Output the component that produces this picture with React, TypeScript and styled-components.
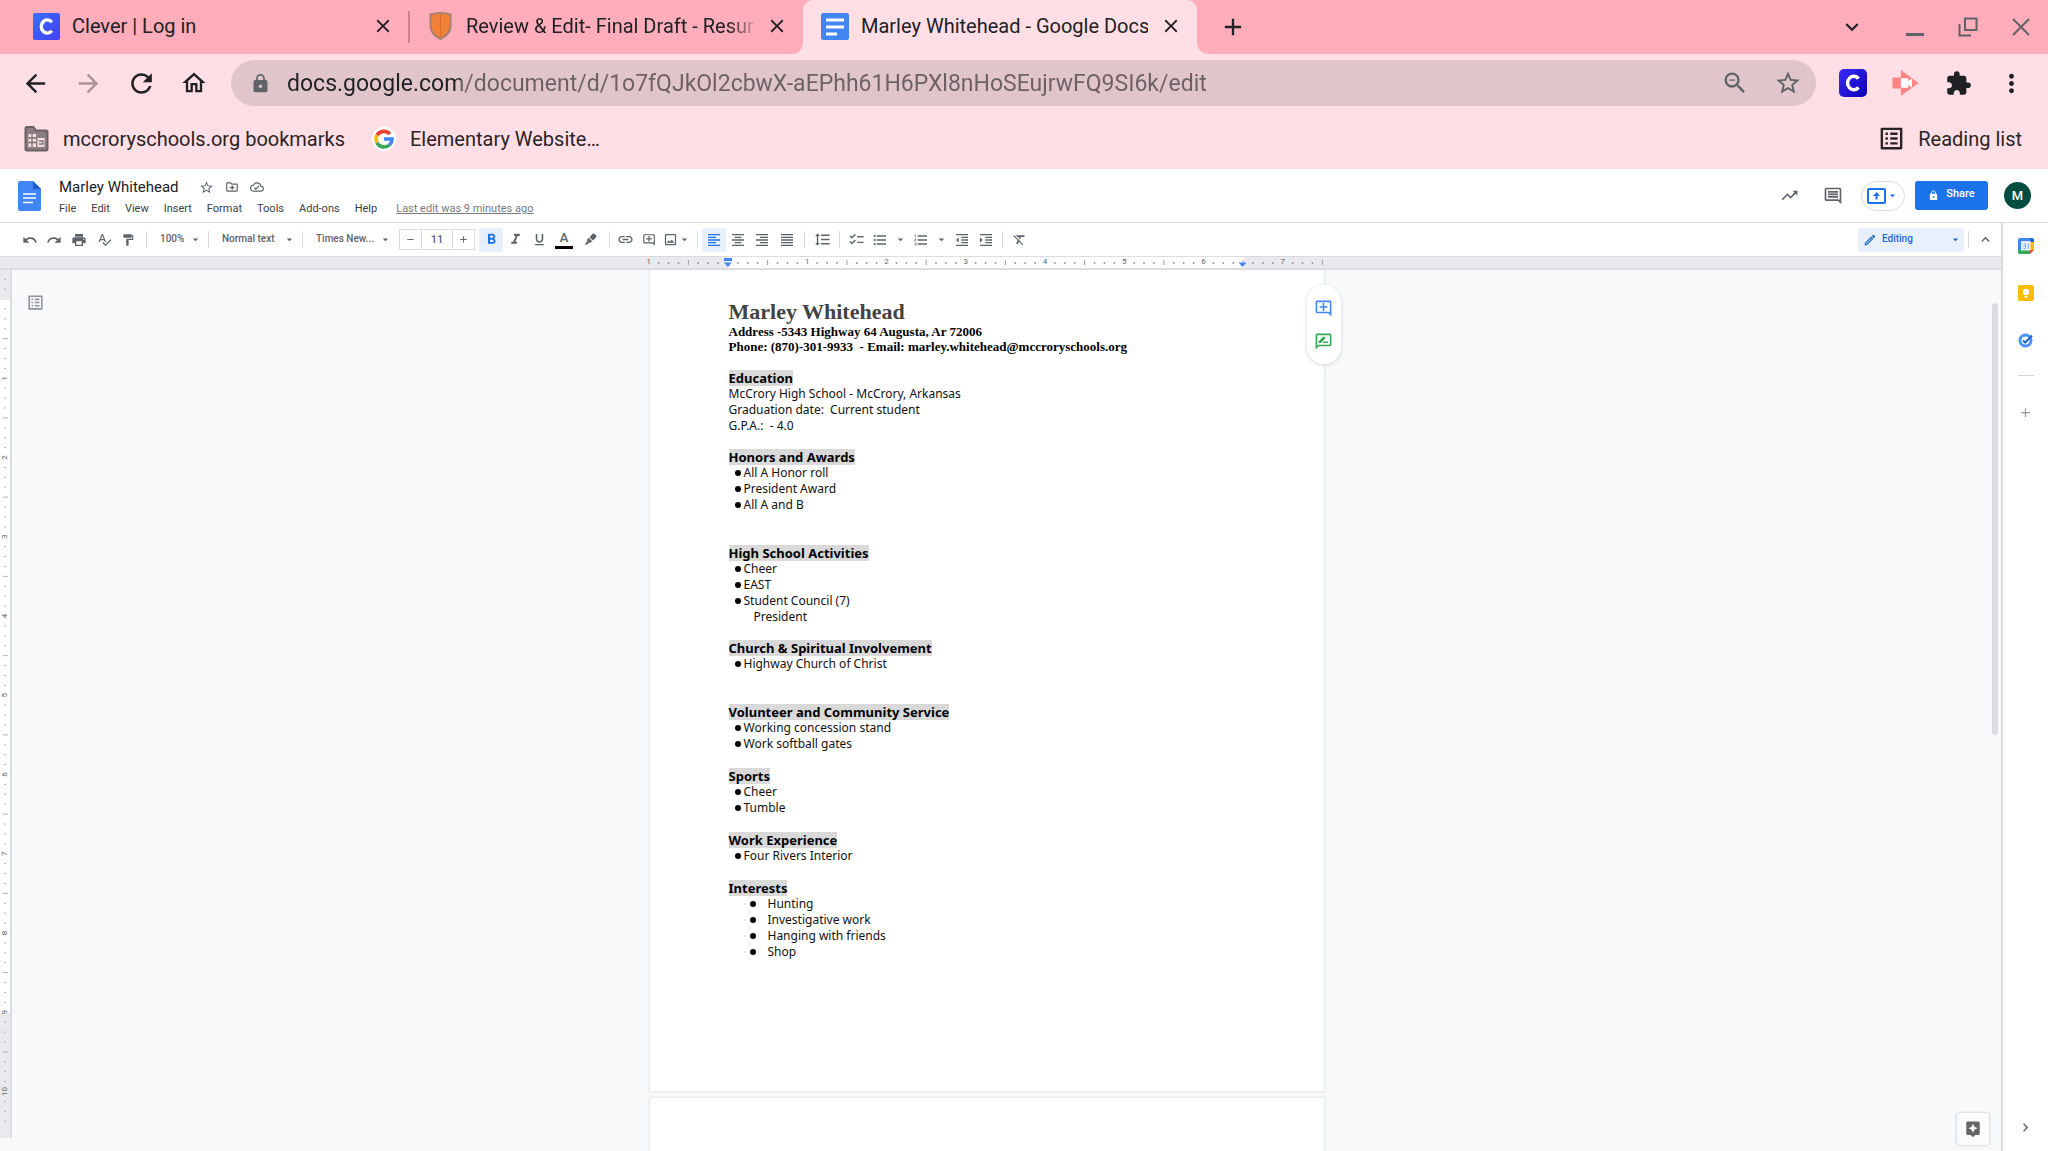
import React from "react";
import styled, { createGlobalStyle, css } from "styled-components";
import {
  MdAdd, MdArrowBack, MdArrowDropDown, MdArrowForward, MdAssistant, MdChecklist, MdChevronRight,
  MdClose, MdExtension, MdFormatAlignCenter, MdFormatAlignJustify, MdFormatAlignLeft,
  MdFormatAlignRight, MdFormatBold, MdFormatClear, MdFormatIndentDecrease, MdFormatIndentIncrease,
  MdFormatItalic, MdFormatLineSpacing, MdFormatListBulleted, MdFormatListNumbered, MdFormatPaint,
  MdFormatUnderlined, MdKeyboardArrowDown, MdKeyboardArrowUp, MdLink, MdListAlt, MdLock, MdMoreVert,
  MdOutlineAddComment, MdOutlineCloudDone, MdOutlineComment, MdOutlineDriveFileMove,
  MdOutlineEdit, MdOutlineHome, MdOutlineImage, MdOutlineRateReview, MdPrint, MdRedo, MdRefresh,
  MdRemove, MdSpellcheck, MdStarBorder, MdTrendingUp, MdUndo, MdZoomOut,
} from "react-icons/md";

const ui = `Roboto, "Liberation Sans", sans-serif`;
const grey = "#5f6368";

const Global = createGlobalStyle`
  * { box-sizing: border-box; }
  body { margin: 0; font-family: ${ui}; color: #202124; background: #fff; }
  button, input, select { font: inherit; color: inherit; }
  h1, h2, p, ul { margin: 0; padding: 0; }
`;

const Screen = styled.div`
  display: flex;
  flex-direction: column;
  height: 100vh;
  overflow: hidden;
`;

const PlainButton = styled.button<{ $w?: number }>`
  display: flex;
  flex: none;
  align-items: center;
  justify-content: center;
  width: ${(p) => (p.$w ? `${p.$w}px` : "auto")};
  padding: 0;
  border: 0;
  background: none;
  svg { flex: none; }
`;

/* Browser frame */
const TabStrip = styled.div`
  display: flex;
  flex: none;
  height: 54px;
  padding: 0 1px 0 15px;
  background: #ffadba;
`;

const Tab = styled.div<{ $active?: boolean; $divided?: boolean }>`
  position: relative;
  display: flex;
  align-items: center;
  gap: 12px;
  width: 394px;
  padding: 0 15px 2px 18px;
  font-size: 20px;
  ${(p) => p.$divided && css`
    &::after {
      content: "";
      position: absolute;
      right: -1px;
      top: 11px;
      width: 2px;
      height: 32px;
      background: #c9858f;
    }
  `}
  ${(p) => p.$active && css`
    background: #ffdfe5;
    border-radius: 10px 10px 0 0;
    &::before, &::after {
      content: "";
      position: absolute;
      bottom: 0;
      width: 10px;
      height: 10px;
    }
    &::before {
      left: -10px;
      background: radial-gradient(circle at 0 0, transparent 9px, #ffdfe5 10px);
    }
    &::after {
      right: -10px;
      background: radial-gradient(circle at 100% 0, transparent 9px, #ffdfe5 10px);
    }
  `}
`;

const TabTitle = styled.span<{ $fade?: boolean }>`
  flex: 1;
  overflow: hidden;
  white-space: nowrap;
  ${(p) => p.$fade && css`
    mask-image: linear-gradient(90deg, #000 91%, transparent 102%);
  `}
`;

const WindowButtons = styled.div`
  display: flex;
  align-items: center;
  margin-left: auto;
  color: ${grey};
  button { width: 53px; }
  button:first-child { width: 72px; color: #202124; }
`;

const NavBar = styled.div`
  display: flex;
  flex: none;
  align-items: center;
  height: 58px;
  padding: 0 10px 0 9px;
  background: #ffdfe5;
`;

const Omnibox = styled.label`
  display: flex;
  flex: 1;
  align-items: center;
  height: 46px;
  margin: 0 10px 0 11px;
  padding: 0 2px 0 19px;
  border-radius: 23px;
  background: #e0c5ca;
  color: ${grey};
  input {
    flex: 1;
    min-width: 0;
    margin-left: 16px;
    padding: 0;
    border: 0;
    outline: 0;
    font-size: 23px;
    color: transparent;
    background: linear-gradient(90deg, #202124 174px, #6b6064 174px);
    background-clip: text;
    -webkit-background-clip: text;
  }
`;

const BookmarkBar = styled.div`
  display: flex;
  flex: none;
  align-items: center;
  gap: 27px;
  height: 57px;
  padding: 0 26px 4px 24px;
  background: #ffdfe5;
  font-size: 20px;
`;

const Bookmark = styled.a<{ $end?: boolean; $gap: number }>`
  display: flex;
  align-items: center;
  gap: ${(p) => p.$gap}px;
  margin-left: ${(p) => (p.$end ? "auto" : "0")};
  color: #2b2427;
  text-decoration: none;
`;

/* Docs header */
const DocsHeader = styled.header`
  display: flex;
  flex: none;
  align-items: center;
  height: 54px;
  padding: 0 17px 0 18px;
  border-bottom: 1px solid #dadce0;
  color: ${grey};
`;

const TitleBlock = styled.div`
  display: flex;
  flex-direction: column;
  gap: 4px;
  margin-left: 18px;
  padding-top: 3px;
`;

const TitleRow = styled.div`
  display: flex;
  align-items: center;
  gap: 9px;
  height: 20px;
`;

const DocTitle = styled.h1`
  margin-right: 11px;
  font-size: 15px;
  line-height: 20px;
  font-weight: 400;
  color: #202124;
`;

const MenuRow = styled.nav`
  display: flex;
  gap: 15px;
  font-size: 11px;
  line-height: 16px;
  color: #3c4043;
  a { margin-left: 4px; color: #777b80; }
`;

const HeaderActions = styled.div`
  display: flex;
  align-items: center;
  margin-left: auto;
`;

const PresentButton = styled(PlainButton)`
  width: 44px;
  height: 30px;
  margin: 0 10px 0 6px;
  border: 1px solid #dadce0;
  border-radius: 15px;
  color: #1a73e8;
`;

const ShareButton = styled(PlainButton)`
  gap: 7px;
  width: 73px;
  height: 29px;
  border-radius: 3px;
  background: #1a73e8;
  color: #fff;
  font-size: 11px;
  font-weight: 500;
  span { padding-bottom: 5px; }
`;

const Avatar = styled(PlainButton)`
  width: 27px;
  height: 27px;
  margin-left: 16px;
  border-radius: 50%;
  background: #004d40;
  color: #fff;
  font-size: 13px;
  font-weight: 500;
`;

/* Workspace */
const Workspace = styled.div`
  display: flex;
  flex: 1;
  min-height: 0;
`;

const Editor = styled.div`
  display: flex;
  flex: 1;
  flex-direction: column;
  min-width: 0;
`;

const Toolbar = styled.div`
  display: flex;
  flex: none;
  align-items: center;
  height: 33px;
  padding: 0 4px 0 18px;
  color: ${grey};
`;

const ToolButton = styled(PlainButton)<{ $on?: boolean }>`
  width: ${(p) => p.$w ?? 24}px;
  height: 24px;
  border-radius: 2px;
  background: ${(p) => (p.$on ? "#e8f0fe" : "none")};
  color: ${(p) => (p.$on ? "#1a73e8" : "inherit")};
`;

const Divider = styled.span<{ $tight?: boolean }>`
  width: 1px;
  height: 17px;
  margin: ${(p) => (p.$tight ? "0 4px" : "0 3px 0 6px")};
  background: #dadce0;
`;

const Picker = styled.label<{ $w: number }>`
  display: flex;
  align-items: center;
  width: ${(p) => p.$w}px;
  padding-left: 10px;
  font-size: 10px;
  font-weight: 500;
  select {
    flex: 1;
    min-width: 0;
    padding: 0 0 2px;
    border: 0;
    appearance: none;
    background: none;
  }
`;

const ModePicker = styled(Picker)`
  height: 24px;
  margin-left: auto;
  padding: 0 2px 0 5px;
  border-radius: 3px;
  background: #e8f0fe;
  color: #1967d2;
  select { margin-left: 5px; }
`;

const SizeBox = styled.div`
  display: flex;
  width: 76px;
  height: 21px;
  margin: 0 4px 0 7px;
  border: 1px solid #dadce0;
  input {
    width: 32px;
    padding: 0;
    border: solid #dadce0;
    border-width: 0 1px;
    font-size: 11px;
    font-weight: 500;
    text-align: center;
  }
  button { flex: 1; }
`;

const TextColour = styled.span`
  display: block;
  width: 18px;
  border-bottom: 3px solid #000;
  font-size: 13px;
  line-height: 16px;
  font-weight: 500;
`;

const RulerBar = styled.div`
  display: flex;
  flex: none;
  justify-content: center;
  height: 14px;
  padding: 0 40px 0 12px;
  border: solid #dadce0;
  border-width: 1px 0 2px;
  background: #e8eaed;
  svg { overflow: visible; }
`;

const Canvas = styled.main`
  position: relative;
  display: flex;
  flex: 1;
  align-items: flex-start;
  min-height: 0;
  background: #f8f9fb;
`;

const SideRuler = styled.div`
  flex: none;
  width: 12px;
  border-right: 2px solid #dadce0;
  background: #e8eaed;
  svg { display: block; }
`;

const Pages = styled.div`
  display: flex;
  flex: 1;
  flex-direction: column;
  align-items: center;
  gap: 7px;
  height: 100%;
  padding-right: 40px;
  overflow: hidden;
`;

const Sheet = styled.article`
  position: relative;
  flex: none;
  width: 674px;
  min-height: 821px;
  padding: 29px 79px;
  background: #fff;
  box-shadow: 0 0 2px 1px #e3e5e8;
  font-family: "Noto Sans", "Open Sans", sans-serif;
  font-size: 12px;
  line-height: 16px;
  color: #111;
  white-space: pre-wrap;
`;

const PersonName = styled.h1`
  font: bold 22px/25px "Liberation Serif", serif;
  color: #434343;
`;

const Contact = styled.p`
  font: bold 13px/15px "Liberation Serif", serif;
  color: #000;
`;

const Section = styled.section<{ $gap: number }>`
  margin-top: ${(p) => p.$gap}px;
  h2 {
    font-size: 13px;
    line-height: 16px;
    color: #000;
  }
  mark {
    display: inline-block;
    background: #d9d9d9;
    color: inherit;
  }
`;

const Bullets = styled.ul<{ $wide?: boolean }>`
  padding-left: ${(p) => (p.$wide ? 21 : 6)}px;
  list-style: none;
  li { display: flex; align-items: center; }
  li::before {
    content: "";
    width: 6px;
    height: 6px;
    margin-right: ${(p) => (p.$wide ? 12 : 3)}px;
    border-radius: 50%;
    background: #000;
  }
`;

const Continuation = styled.p`
  padding-left: 25px;
`;

const CommentPill = styled.div`
  position: absolute;
  top: 15px;
  right: -17px;
  display: flex;
  flex-direction: column;
  align-items: center;
  justify-content: center;
  gap: 14px;
  width: 34px;
  height: 79px;
  border-radius: 17px;
  background: #fff;
  box-shadow: 0 1px 4px #d4d7db;
  button:first-child { color: #4285f4; }
  button:last-child { color: #34a853; }
`;

const OutlineButton = styled(PlainButton)`
  position: absolute;
  left: 26px;
  top: 23px;
  color: #8f9296;
`;

const ScrollThumb = styled.div`
  position: absolute;
  right: 3px;
  top: 33px;
  width: 6px;
  height: 49%;
  border-radius: 3px;
  background: #dadce0;
`;

const ExploreButton = styled(PlainButton)`
  position: absolute;
  right: 12px;
  bottom: 6px;
  width: 32px;
  height: 32px;
  border-radius: 3px;
  background: #fbfbfb;
  box-shadow: 0 0 3px #b5b8bc;
  color: #666;
`;

const SideRail = styled.aside`
  display: flex;
  flex: none;
  flex-direction: column;
  align-items: center;
  gap: 31px;
  width: 47px;
  padding: 15px 0 15px;
  border-left: 2px solid #dadce0;
  background: #fff;
  hr {
    width: 16px;
    margin: -4px 0 -2px;
    border: 0;
    border-top: 1px solid #d0d3d7;
  }
  button:last-child { margin-top: auto; }
`;

const CleverLogo = ({ size, deep }: { size: number; deep?: boolean }) => (
  <svg width={size} height={size} viewBox="0 0 28 28">
    <defs>
      <linearGradient id={deep ? "cd" : "cl"} x1="0" y1="0" x2="1" y2="1">
        <stop offset="0" stopColor={deep ? "#3a2cff" : "#3b6dff"} />
        <stop offset="1" stopColor={deep ? "#0b00b0" : "#4340f0"} />
      </linearGradient>
    </defs>
    <rect width="28" height="28" rx={deep ? 5 : 2} fill={`url(#${deep ? "cd" : "cl"})`} />
    <path d="M19.5 9.6A6.2 6.8 0 1 0 19.5 18.4" fill="none" stroke="#fff" strokeWidth="3.4" />
  </svg>
);

const ShieldLogo = () => (
  <svg width="27" height="28" viewBox="0 0 27 28">
    <path d="M3.5 2.5Q13.500 -.5 23.500 2.500V15Q22.500 22.500 13.500 27Q4.500 22.500 3.500 15Z" fill="#f28138" stroke="#a97f70" strokeWidth="2" />
    <path d="M13.500 2V25" stroke="#d96c2c" strokeWidth="1" />
  </svg>
);

const DocsFavicon = () => (
  <svg width="28" height="27" viewBox="0 0 28 27">
    <rect width="28" height="27" rx="2.500" fill="#4285f4" />
    <path d="M5 7h18M5 14h18M5 21h11" stroke="#fff" strokeWidth="3" />
  </svg>
);

const DocsLogo = () => (
  <svg width="23" height="30" viewBox="0 0 23 30">
    <path d="M2 0H15L23 8V28Q23 30 21 30H2Q0 30 0 28V2Q0 0 2 0Z" fill="#4285f4" />
    <path d="M15 0L23 8H15Z" fill="#1a5dc8" />
    <path d="M5 13h13M5 17h13M5 21.500h10" stroke="#fff" strokeWidth="1.700" />
  </svg>
);

const GoogleLogo = () => (
  <svg width="24" height="24" viewBox="0 0 24 24">
    <circle cx="12" cy="12" r="12" fill="#fff" />
    <g fill="none" strokeWidth="3.600">
      <path d="M17.800 7A8 8 0 0 0 5 8.200" stroke="#ea4335" />
      <path d="M5 8.200A8 8 0 0 0 5 15.800" stroke="#fbbc05" />
      <path d="M5 15.800A8 8 0 0 0 17.300 18" stroke="#34a853" />
      <path d="M17.300 18A8 8 0 0 0 20 12H12" stroke="#4285f4" />
    </g>
  </svg>
);

const ManagedFolder = () => (
  <svg width="25" height="26" viewBox="0 0 25 26">
    <path d="M1.500 2.500Q1.500 1 3 1H9.500L12 4.500H22Q23.500 4.500 23.500 6V23Q23.500 24.500 22 24.500H3Q1.500 24.500 1.500 23Z" fill="#8a7f83" stroke="#6b6266" strokeWidth="2" />
    <path d="M4.500 8H12V21H4.500ZM13.500 12H20.500V21H13.500Z" fill="#f4dfe3" />
    <path d="M4.500 12H12M4.500 16.500H12M8 8V21M15 15H19V18H15" fill="none" stroke="#7a7074" strokeWidth="1.300" />
  </svg>
);

const CastArrow = () => (
  <svg width="27" height="26" viewBox="0 0 28 28">
    <path d="M0 8H9V20H0ZM9 0L28 14L9 28Z" fill="#ff8585" />
    <path d="M9 9H17V12L21 9V19L17 16V19H9Z" fill="#fff" />
  </svg>
);

const RestoreIcon = () => (
  <svg width="20" height="20" viewBox="0 0 20 20" fill="none" stroke={grey} strokeWidth="2">
    <path d="M7 1.500H18.500V13H7ZM1.500 7V18.500H13" />
  </svg>
);

const CloseIcon = () => (
  <svg width="18" height="18" viewBox="0 0 18 18" stroke={grey} strokeWidth="2">
    <path d="M1 1L17 17M17 1L1 17" />
  </svg>
);

const MinimiseIcon = () => (
  <svg width="20" height="20" viewBox="0 0 20 20" stroke={grey} strokeWidth="3">
    <path d="M1 17.500H19" />
  </svg>
);

const HighlighterIcon = () => (
  <svg width="13" height="13" viewBox="0 0 14 14" fill={grey}>
    <path d="M8.500 1.500Q10 0 11.500 1L13 2.500Q14 4 12.500 5.500L9.500 8L6 4.500ZM5.200 5.200L8.800 8.800L7 10.500H5L3.500 12.500H.5L3.500 9V7Z" />
  </svg>
);

const PresentIcon = () => (
  <svg width="19" height="16" viewBox="0 0 19 16">
    <rect x="1" y="1" width="17" height="14" rx="1" fill="none" stroke="#1a73e8" strokeWidth="2" />
    <path d="M9.500 4L13 8H10.500V11.500H8.500V8H6Z" fill="#1a73e8" />
  </svg>
);

const CalendarIcon = () => (
  <svg width="16" height="16" viewBox="0 0 16 16">
    <path d="M0 2Q0 0 2 0H12V4H4V16H2Q0 16 0 14Z" fill="#4285f4" />
    <path d="M12 0H14Q16 0 16 2V4H12Z" fill="#1967d2" />
    <path d="M12 4H16V12H12Z" fill="#fbbc04" />
    <path d="M4 12H12V16H2Q0 16 0 14V12Z" fill="#34a853" />
    <path d="M12 12H16L12 16Z" fill="#ea4335" />
    <rect x="3" y="3" width="9.500" height="9.500" fill="#e4eefe" />
    <path d="M5.500 6H7.500V10.500M5.500 8.200H7.500M5.500 10.500H7.500M10.500 5.500V11" fill="none" stroke="#8ab4f8" />
  </svg>
);

const KeepIcon = () => (
  <svg width="16" height="16" viewBox="0 0 16 16">
    <rect width="16" height="16" rx="2" fill="#fbbc04" />
    <circle cx="8" cy="7" r="3.200" fill="#fff" />
    <path d="M6.500 11H9.500V12.500H6.500Z" fill="#fff" />
  </svg>
);

const TasksIcon = () => (
  <svg width="16" height="16" viewBox="0 0 16 16" fill="none">
    <circle cx="7.500" cy="8.500" r="5.500" stroke="#4a90ff" strokeWidth="3" />
    <path d="M5 8.500L7.200 10.500L14 3.500" stroke="#1a66d6" strokeWidth="2" />
  </svg>
);

const INCH = 79.25;

/** Eighth-inch marks, measured from the margin at `zero`. */
const marks = (from: number, to: number, zero: number) =>
  Array.from({ length: to - from + 1 }, (_, i) => from + i).map((n) => ({
    n,
    at: zero + (n * INCH) / 8,
    whole: n % 8 === 0,
    half: n % 4 === 0,
  }));

const TopRuler = () => (
  <svg width="674" height="11" viewBox="0 0 674 11" aria-label="Horizontal ruler">
    <rect x="78" width="516" height="11" fill="#fff" />
    {marks(-8, 60, 78).map(({ n, at, whole, half }) =>
      whole ? (
        n !== 0 && (
          <text key={n} x={at} y="7" fontSize="8" textAnchor="middle" fill={grey}>{Math.abs(n / 8)}</text>
        )
      ) : (
        <path key={n} d={half ? `M${at} 3V8` : `M${at} 5V7`} stroke="#9a9da1" strokeWidth={half ? 1 : 1.5} />
      )
    )}
    <path d="M74 1H82V4H74ZM74 5.500H82L78 10Z" fill="#4285f4" />
    <path d="M588.500 5.500H596.500L592.500 10Z" fill="#4285f4" />
  </svg>
);

const LeftRuler = () => (
  <svg width="10" height="868" viewBox="0 0 10 868" aria-label="Vertical ruler">
    <rect y="30" width="10" height="713" fill="#fff" />
    {marks(-3, 83, 29).map(({ n, at, whole, half }) =>
      whole ? (
        n !== 0 && (
          <text key={n} transform={`translate(7 ${at}) rotate(-90)`} fontSize="8" textAnchor="middle" fill={grey}>{n / 8}</text>
        )
      ) : (
        <path key={n} d={half ? `M3 ${at}H8` : `M4 ${at}H6`} stroke="#b0b3b7" strokeWidth="1" />
      )
    )}
  </svg>
);

const sections = [
  { title: "Honors and Awards", gap: 15, items: ["All A Honor roll", "President Award", "All A and B"] },
  { title: "High School Activities", gap: 32, items: ["Cheer", "EAST", "Student Council (7)"], more: "President" },
  { title: "Church & Spiritual Involvement", gap: 15, items: ["Highway Church of Christ"] },
  { title: "Volunteer and Community Service", gap: 32, items: ["Working concession stand", "Work softball gates"] },
  { title: "Sports", gap: 16, items: ["Cheer", "Tumble"] },
  { title: "Work Experience", gap: 16, items: ["Four Rivers Interior"] },
  { title: "Interests", gap: 16, wide: true, items: ["Hunting", "Investigative work", "Hanging with friends", "Shop"] },
];

const menus = ["File", "Edit", "View", "Insert", "Format", "Tools", "Add-ons", "Help"];

const Tool = ({ label, on, w, children }: { label: string; on?: boolean; w?: number; children: React.ReactNode }) => (
  <ToolButton aria-label={label} $on={on} $w={w}>{children}</ToolButton>
);

const Caret = () => <MdArrowDropDown size={13} />;

export default function App() {
  return (
    <Screen>
      <Global />
      <TabStrip>
        <Tab $divided>
          <CleverLogo size={27} />
          <TabTitle>Clever | Log in</TabTitle>
          <PlainButton $w={22} aria-label="Close tab"><MdClose size={22} /></PlainButton>
        </Tab>
        <Tab>
          <ShieldLogo />
          <TabTitle $fade>Review &amp; Edit- Final Draft - Resume</TabTitle>
          <PlainButton $w={22} aria-label="Close tab"><MdClose size={22} /></PlainButton>
        </Tab>
        <Tab $active>
          <DocsFavicon />
          <TabTitle>Marley Whitehead - Google Docs</TabTitle>
          <PlainButton $w={22} aria-label="Close tab"><MdClose size={22} /></PlainButton>
        </Tab>
        <PlainButton $w={72} aria-label="New tab"><MdAdd size={28} /></PlainButton>
        <WindowButtons>
          <PlainButton aria-label="Search tabs"><MdKeyboardArrowDown size={26} /></PlainButton>
          <PlainButton aria-label="Minimise"><MinimiseIcon /></PlainButton>
          <PlainButton aria-label="Restore"><RestoreIcon /></PlainButton>
          <PlainButton aria-label="Close window"><CloseIcon /></PlainButton>
        </WindowButtons>
      </TabStrip>

      <NavBar>
        <PlainButton $w={53} aria-label="Back"><MdArrowBack size={29} /></PlainButton>
        <PlainButton $w={53} aria-label="Forward"><MdArrowForward size={29} color="#a8959a" /></PlainButton>
        <PlainButton $w={53} aria-label="Reload"><MdRefresh size={31} /></PlainButton>
        <PlainButton $w={52} aria-label="Home"><MdOutlineHome size={28} /></PlainButton>
        <Omnibox>
          <MdLock size={21} />
          <input aria-label="Address" defaultValue="docs.google.com/document/d/1o7fQJkOl2cbwX-aEPhh61H6PXl8nHoSEujrwFQ9SI6k/edit" />
          <PlainButton $w={53} aria-label="Zoom"><MdZoomOut size={28} /></PlainButton>
          <PlainButton $w={53} aria-label="Bookmark this page"><MdStarBorder size={28} /></PlainButton>
        </Omnibox>
        <PlainButton $w={53} aria-label="Clever"><CleverLogo size={28} deep /></PlainButton>
        <PlainButton $w={53} aria-label="Screencastify"><CastArrow /></PlainButton>
        <PlainButton $w={53} aria-label="Extensions"><MdExtension size={27} /></PlainButton>
        <PlainButton $w={53} aria-label="Browser menu"><MdMoreVert size={29} /></PlainButton>
      </NavBar>

      <BookmarkBar>
        <Bookmark href="#" $gap={14}><ManagedFolder />mccroryschools.org bookmarks</Bookmark>
        <Bookmark href="#" $gap={14}><GoogleLogo />Elementary Website…</Bookmark>
        <Bookmark href="#" $gap={12} $end><MdListAlt size={29} />Reading list</Bookmark>
      </BookmarkBar>

      <DocsHeader>
        <DocsLogo />
        <TitleBlock>
          <TitleRow>
            <DocTitle>Marley Whitehead</DocTitle>
            <PlainButton $w={16} aria-label="Star"><MdStarBorder size={15} /></PlainButton>
            <PlainButton $w={16} aria-label="Move"><MdOutlineDriveFileMove size={14} /></PlainButton>
            <PlainButton $w={16} aria-label="Saved to Drive"><MdOutlineCloudDone size={14} /></PlainButton>
          </TitleRow>
          <MenuRow>
            {menus.map((m) => <PlainButton key={m}>{m}</PlainButton>)}
            <a href="#">Last edit was 9 minutes ago</a>
          </MenuRow>
        </TitleBlock>
        <HeaderActions>
          <PlainButton $w={44} aria-label="Activity"><MdTrendingUp size={19} /></PlainButton>
          <PlainButton $w={44} aria-label="Comments"><MdOutlineComment size={20} /></PlainButton>
          <PresentButton aria-label="Present"><PresentIcon /><Caret /></PresentButton>
          <ShareButton><MdLock size={11} /><span>Share</span></ShareButton>
          <Avatar aria-label="Account">M</Avatar>
        </HeaderActions>
      </DocsHeader>

      <Workspace>
        <Editor>
          <Toolbar>
            <Tool label="Undo"><MdUndo size={16} /></Tool>
            <Tool label="Redo"><MdRedo size={16} /></Tool>
            <Tool label="Print" w={26}><MdPrint size={16} /></Tool>
            <Tool label="Spelling"><MdSpellcheck size={15} /></Tool>
            <Tool label="Paint format"><MdFormatPaint size={14} /></Tool>
            <Divider />
            <Picker $w={52}>
              <select aria-label="Zoom"><option>100%</option></select>
              <Caret />
            </Picker>
            <Divider />
            <Picker $w={84}>
              <select aria-label="Style"><option>Normal text</option></select>
              <Caret />
            </Picker>
            <Divider />
            <Picker $w={86}>
              <select aria-label="Font"><option>Times New...</option></select>
              <Caret />
            </Picker>
            <SizeBox>
              <PlainButton aria-label="Smaller"><MdRemove size={11} /></PlainButton>
              <input aria-label="Font size" defaultValue="11" />
              <PlainButton aria-label="Larger"><MdAdd size={11} /></PlainButton>
            </SizeBox>
            <Tool label="Bold" on><MdFormatBold size={17} /></Tool>
            <Tool label="Italic"><MdFormatItalic size={17} /></Tool>
            <Tool label="Underline"><MdFormatUnderlined size={15} /></Tool>
            <Tool label="Text colour" w={26}><TextColour>A</TextColour></Tool>
            <Tool label="Highlight colour" w={26}><HighlighterIcon /></Tool>
            <Divider />
            <Tool label="Link"><MdLink size={17} /></Tool>
            <Tool label="Add comment"><MdOutlineAddComment size={14} /></Tool>
            <Tool label="Image" w={32}><MdOutlineImage size={15} /><Caret /></Tool>
            <Divider $tight />
            <Tool label="Align left" on><MdFormatAlignLeft size={16} /></Tool>
            <Tool label="Align centre"><MdFormatAlignCenter size={16} /></Tool>
            <Tool label="Align right"><MdFormatAlignRight size={16} /></Tool>
            <Tool label="Justify" w={26}><MdFormatAlignJustify size={16} /></Tool>
            <Divider $tight />
            <Tool label="Line spacing" w={26}><MdFormatLineSpacing size={17} /></Tool>
            <Divider $tight />
            <Tool label="Checklist"><MdChecklist size={17} /></Tool>
            <Tool label="Bulleted list"><MdFormatListBulleted size={16} /></Tool>
            <Tool label="Bullet styles" w={17}><Caret /></Tool>
            <Tool label="Numbered list"><MdFormatListNumbered size={16} /></Tool>
            <Tool label="Number styles" w={17}><Caret /></Tool>
            <Tool label="Decrease indent"><MdFormatIndentDecrease size={16} /></Tool>
            <Tool label="Increase indent"><MdFormatIndentIncrease size={16} /></Tool>
            <Divider $tight />
            <Tool label="Clear formatting"><MdFormatClear size={15} /></Tool>
            <ModePicker $w={106}>
              <MdOutlineEdit size={14} />
              <select aria-label="Mode"><option>Editing</option></select>
              <Caret />
            </ModePicker>
            <Divider $tight />
            <Tool label="Hide menus"><MdKeyboardArrowUp size={17} /></Tool>
          </Toolbar>
          <RulerBar><TopRuler /></RulerBar>
          <Canvas>
            <SideRuler><LeftRuler /></SideRuler>
            <Pages>
              <Sheet>
                <PersonName>Marley Whitehead</PersonName>
                <Contact>Address -5343 Highway 64 Augusta, Ar 72006</Contact>
                <Contact>{"Phone: (870)-301-9933  - Email: marley.whitehead@mccroryschools.org"}</Contact>
                <Section $gap={16}>
                  <h2><mark>Education</mark></h2>
                  <p>McCrory High School - McCrory, Arkansas</p>
                  <p>{"Graduation date:  Current student"}</p>
                  <p>{"G.P.A.:  - 4.0"}</p>
                </Section>
                {sections.map((s) => (
                  <Section key={s.title} $gap={s.gap}>
                    <h2><mark>{s.title}</mark></h2>
                    <Bullets $wide={s.wide}>
                      {s.items.map((item) => <li key={item}>{item}</li>)}
                    </Bullets>
                    {s.more && <Continuation>{s.more}</Continuation>}
                  </Section>
                ))}
                <CommentPill>
                  <PlainButton aria-label="Add comment"><MdOutlineAddComment size={19} /></PlainButton>
                  <PlainButton aria-label="Suggest edits"><MdOutlineRateReview size={19} /></PlainButton>
                </CommentPill>
              </Sheet>
              <Sheet />
            </Pages>
            <OutlineButton aria-label="Show outline"><MdListAlt size={19} /></OutlineButton>
            <ScrollThumb />
            <ExploreButton aria-label="Explore"><MdAssistant size={18} /></ExploreButton>
          </Canvas>
        </Editor>
        <SideRail>
          <PlainButton aria-label="Calendar"><CalendarIcon /></PlainButton>
          <PlainButton aria-label="Keep"><KeepIcon /></PlainButton>
          <PlainButton aria-label="Tasks"><TasksIcon /></PlainButton>
          <hr />
          <PlainButton aria-label="Get add-ons"><MdAdd size={15} color="#999" /></PlainButton>
          <PlainButton aria-label="Hide side panel"><MdChevronRight size={17} color={grey} /></PlainButton>
        </SideRail>
      </Workspace>
    </Screen>
  );
}
